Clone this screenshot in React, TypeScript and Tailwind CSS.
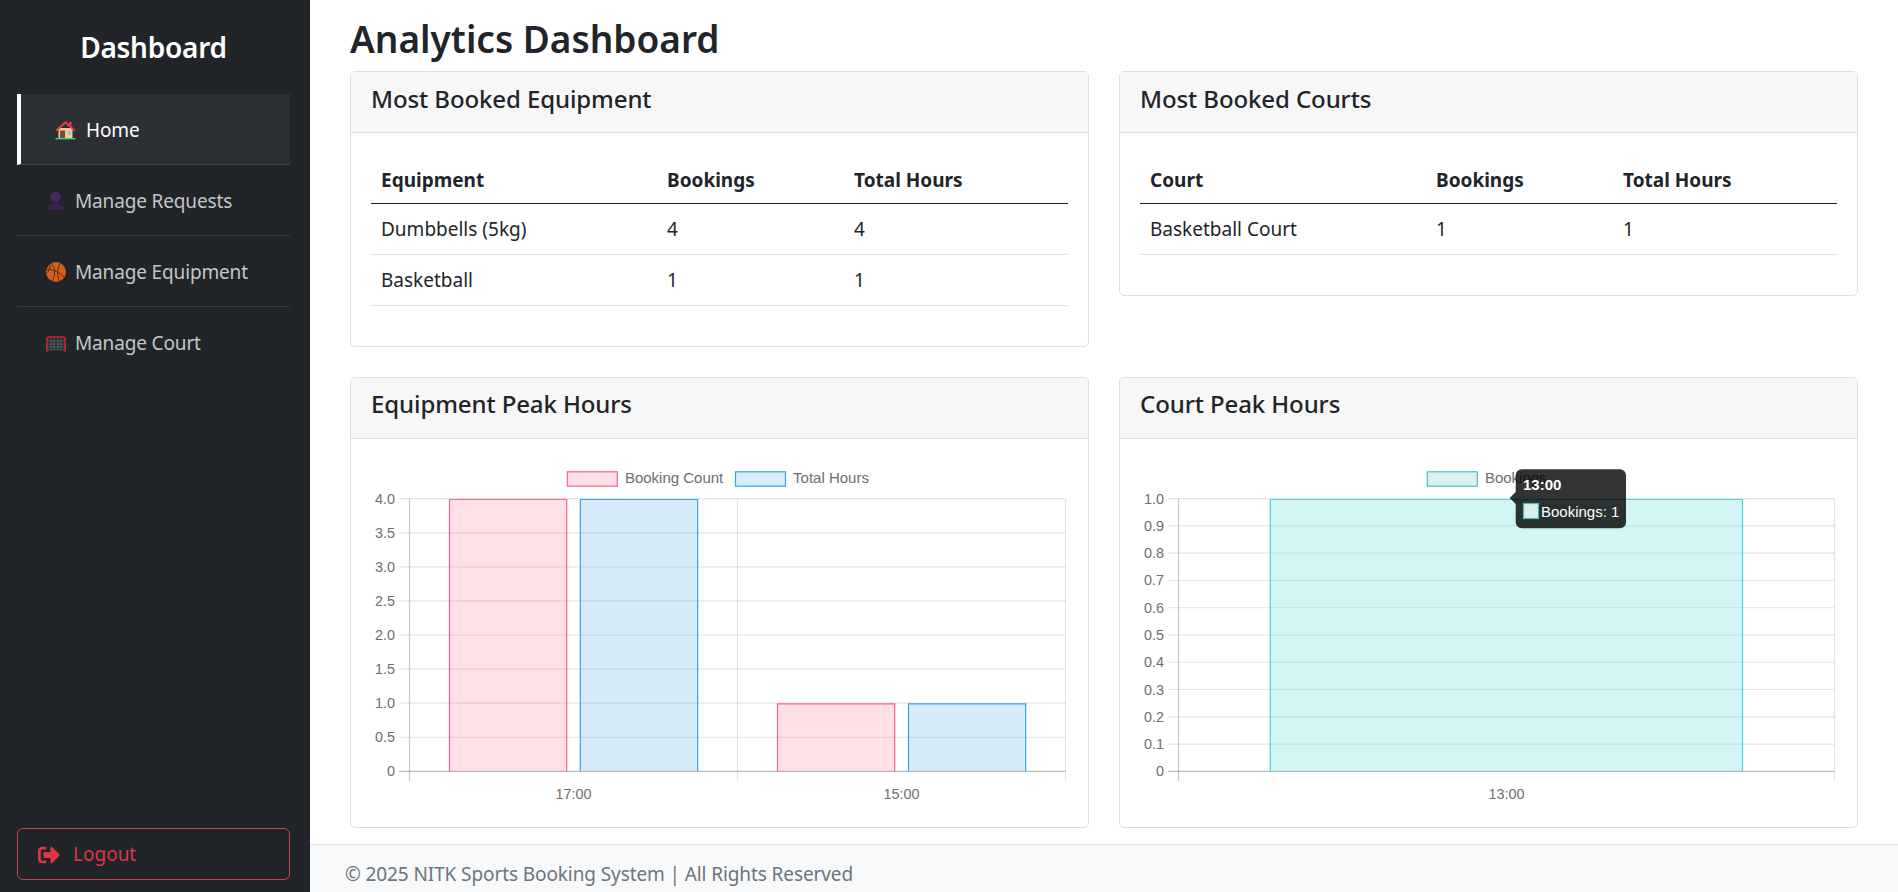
import React from 'react';
import { FaSignOutAlt } from 'react-icons/fa';

const UI_FONT = "font-['Noto_Sans','Open_Sans',sans-serif]";

const HomeIcon = () => (
  <svg width="21" height="20" viewBox="0 0 21 20" className="shrink-0">
    <path d="M3.500 8h14v10h-14z" fill="#f9c68f" />
    <path d="M0.500 10 10.500 1l10 9-1.500 1.300-8.500-7.600L2 11.300z" fill="#e8403a" />
    <path d="M14 2h2.500v4L14 4z" fill="#e8403a" />
    <path d="M5 10.500h5V18H5z" fill="#7a4a32" />
    <path d="M12.500 11h3.500v3.500h-3.500z" fill="#7fc8f0" />
    <path d="M0.500 18h20v1.400h-20z" fill="#22e07a" />
  </svg>
);

const PersonIcon = () => (
  <svg width="20" height="20" viewBox="0 0 20 20" className="shrink-0">
    <ellipse cx="9.500" cy="6" rx="5" ry="5.700" fill="#452a5e" />
    <path d="M7 10h5v3l5.500 2.500 1 3.500H0.500l1-3.500L7 13z" fill="#3b2350" />
  </svg>
);

const BallIcon = () => (
  <svg width="20" height="20" viewBox="0 0 20 20" className="shrink-0">
    <circle cx="10" cy="10" r="10" fill="#d2601f" />
    <g fill="none" stroke="#5a2a12" strokeWidth="1">
      <path d="M1 7.500C7 7 14 10 18.500 16" />
      <path d="M5 1.500c4 3 5 10 1.500 17.500" />
      <path d="M14.500 1.300C11 6 11 11 13 19" />
      <path d="M4 3C4.500 6 3 9 0.500 11" />
    </g>
  </svg>
);

const GoalIcon = () => (
  <svg width="20" height="16" viewBox="0 0 20 16" className="shrink-0">
    <g stroke="#6f7376" strokeWidth="0.700" fill="none">
      <path d="M2 5h16M2 8h16M2 11h16" />
      <path d="M2 14Q10 12.500 18 14" />
      <path d="M5 2v11.500M8 2v11M12 2v11M15 2v11.500" />
    </g>
    <path d="M1 15.500V3.500Q1 1 3.500 1h13q2.500 0 2.500 2.500v12" fill="none" stroke="#c8282e" strokeWidth="1.700" />
  </svg>
);

interface Row {
  name: string;
  bookings: number;
  hours: number;
}

const CardHeader: React.FC<{ title: string }> = ({ title }) => (
  <div className="h-[61px] flex items-center pb-[7px] px-[20px] bg-[#f7f7f7] border-b border-[#dfdfdf]">
    <h5 className="text-[24px] font-medium text-[#212529] tracking-[-0.1px]">{title}</h5>
  </div>
);

const StatCard: React.FC<{ title: string; head: string; rows: Row[] }> = ({ title, head, rows }) => (
  <div className="border border-[#dfdfdf] rounded-[5px] overflow-hidden bg-white">
    <CardHeader title={title} />
    <div className="p-[20px]">
      <table className="w-full table-fixed mb-[20px] text-[#212529] text-[19px]">
        <thead>
          <tr className="h-[50px] border-b border-[#212529] text-left">
            <th className="w-[286px] pl-[10px] pt-[4px] font-bold">{head}</th>
            <th className="w-[187px] pl-[10px] pt-[4px] font-bold">Bookings</th>
            <th className="pl-[10px] pt-[4px] font-bold">Total Hours</th>
          </tr>
        </thead>
        <tbody>
          {rows.map((row) => (
            <tr key={row.name} className="h-[51px] border-b border-[#dee2e6]">
              <td className="pl-[10px] pt-[2px]">{row.name}</td>
              <td className="pl-[10px] pt-[2px]">{row.bookings}</td>
              <td className="pl-[10px] pt-[2px]">{row.hours}</td>
            </tr>
          ))}
        </tbody>
      </table>
    </div>
  </div>
);

const GRID = 'rgba(0,0,0,0.1)';
const LEFT = 38.5;
const RIGHT = 694.5;
const TOP = 39.7;
const BOTTOM = 312.3;

const chartText = {
  fontFamily: 'Liberation Sans, Arial, sans-serif',
  fontSize: 14.4,
  fill: '#6e6e6e',
};

interface Bar {
  x1: number;
  x2: number;
  value: number;
  fill: string;
  stroke: string;
}

const Axes: React.FC<{ ticks: string[]; labels: string[] }> = ({ ticks, labels }) => {
  const step = (BOTTOM - TOP) / (ticks.length - 1);
  const slot = (RIGHT - LEFT) / labels.length;
  return (
    <g>
      {ticks.map((tick, i) => {
        const y = TOP + step * i;
        return (
          <g key={tick}>
            <line x1={28} x2={RIGHT} y1={y} y2={y} stroke={GRID} strokeWidth={1.2} />
            <text x={24} y={y + 5} textAnchor="end" {...chartText}>
              {tick}
            </text>
          </g>
        );
      })}
      {labels.map((label, i) => (
        <text key={label} x={LEFT + slot * (i + 0.5)} y={340} textAnchor="middle" {...chartText}>
          {label}
        </text>
      ))}
      {Array.from({ length: labels.length + 1 }).map((_, i) => (
        <line
          key={i}
          x1={LEFT + slot * i}
          x2={LEFT + slot * i}
          y1={TOP}
          y2={322}
          stroke={GRID}
          strokeWidth={1.2}
        />
      ))}
      <line x1={LEFT} x2={LEFT} y1={TOP} y2={322} stroke="rgba(0,0,0,0.12)" strokeWidth={1.2} />
      <line x1={28} x2={RIGHT} y1={BOTTOM} y2={BOTTOM} stroke="rgba(0,0,0,0.18)" strokeWidth={1.2} />
    </g>
  );
};

const Bars: React.FC<{ bars: Bar[]; max: number }> = ({ bars, max }) => (
  <g>
    {bars.map((bar, i) => {
      const top = BOTTOM - ((BOTTOM - TOP) * bar.value) / max + 0.8;
      return (
        <path
          key={i}
          d={`M${bar.x1} ${BOTTOM}V${top}H${bar.x2}V${BOTTOM}`}
          fill={bar.fill}
          stroke={bar.stroke}
          strokeWidth={1.2}
        />
      );
    })}
  </g>
);

const Legend: React.FC<{ x: number; label: string; fill: string; stroke: string }> = ({ x, label, fill, stroke }) => (
  <g>
    <rect x={x} y={12.8} width={50} height={14.4} fill={fill} stroke={stroke} strokeWidth={1.2} />
    <text x={x + 57.6} y={24} {...chartText} fontSize={15}>
      {label}
    </text>
  </g>
);

const PINK = { fill: 'rgba(255,99,132,0.2)', stroke: 'rgb(255,99,132)' };
const BLUE = { fill: 'rgba(54,162,235,0.2)', stroke: 'rgb(54,162,235)' };
const TEAL = { fill: 'rgba(75,192,192,0.2)', stroke: 'rgb(75,192,192)' };

const EquipmentChart = () => (
  <svg width="697" height="348" className="block">
    <Axes ticks={['4.0', '3.5', '3.0', '2.5', '2.0', '1.5', '1.0', '0.5', '0']} labels={['17:00', '15:00']} />
    <Bars
      max={4}
      bars={[
        { x1: 78.5, x2: 195.7, value: 4, ...PINK },
        { x1: 209.3, x2: 326.7, value: 4, ...BLUE },
        { x1: 406.5, x2: 523.7, value: 1, ...PINK },
        { x1: 537.5, x2: 654.7, value: 1, ...BLUE },
      ]}
    />
    <Legend x={196.3} label="Booking Count" {...PINK} />
    <Legend x={364.5} label="Total Hours" {...BLUE} />
  </svg>
);

const CourtChart = () => (
  <svg width="697" height="348" className="block">
    <Axes ticks={['1.0', '0.9', '0.8', '0.7', '0.6', '0.5', '0.4', '0.3', '0.2', '0.1', '0']} labels={['13:00']} />
    <Bars max={1} bars={[{ x1: 130.3, x2: 602.5, value: 1, fill: 'rgba(50,215,215,0.22)', stroke: '#45d6d6' }]} />
    <Legend x={287.3} label="Bookings" {...TEAL} />
    <g>
      <path
        d="M381.700 10.300h98.300a6 6 0 0 1 6 6v47a6 6 0 0 1-6 6h-98.300a6 6 0 0 1-6-6v-18.300l-6-6 6-6v-16.700a6 6 0 0 1 6-6z"
        fill="rgba(0,0,0,0.8)"
      />
      <text x={383} y={31} {...chartText} fontSize={15} fill="#fff" style={{ fontWeight: 700 }}>
        13:00
      </text>
      <rect x={383.500} y={44.500} width={15} height={15} fill="#d8f0f0" stroke="#4fb5b5" strokeWidth={1.2} />
      <text x={401} y={57.700} {...chartText} fontSize={15} fill="#fff">
        Bookings: 1
      </text>
    </g>
  </svg>
);

const ChartCard: React.FC<{ title: string; children: React.ReactNode }> = ({ title, children }) => (
  <div className="border border-[#dfdfdf] rounded-[5px] overflow-hidden bg-white">
    <CardHeader title={title} />
    <div className="p-[20px]">{children}</div>
  </div>
);

const NavItem: React.FC<{ icon: React.ReactNode; label: string; active?: boolean }> = ({ icon, label, active }) => (
  <a
    className={
      active
        ? 'flex items-center h-[71px] pl-[34px] pt-[2px] gap-[10px] border-l-4 border-l-white border-b border-b-white/10 bg-white/5 text-white'
        : 'flex items-center h-[71px] pl-[29px] pt-[2px] gap-[9px] border-b border-b-white/10 text-[#c4c6c8] last:border-b-0'
    }
  >
    {icon}
    <span>{label}</span>
  </a>
);

export default function App() {
  return (
    <div className={`flex h-screen overflow-hidden bg-white ${UI_FONT}`}>
      <aside className="w-[310px] shrink-0 bg-[#212529] flex flex-col pl-[17px] pr-[20px] pb-[12px]">
        <h3 className="h-[94px] flex items-center justify-center text-[28px] font-semibold text-white tracking-[-0.25px]">
          Dashboard
        </h3>
        <nav className="flex flex-col text-[19px] tracking-[-0.15px]">
          <NavItem active icon={<HomeIcon />} label="Home" />
          <NavItem icon={<PersonIcon />} label="Manage Requests" />
          <NavItem icon={<BallIcon />} label="Manage Equipment" />
          <NavItem icon={<GoalIcon />} label="Manage Court" />
        </nav>
        <button className="mt-auto h-[52px] flex items-center gap-[13px] pl-[20px] pt-[1px] border border-[#c9434f] rounded-[6px] text-[#dc3545] text-[19px]">
          <FaSignOutAlt size={22} />
          Logout
        </button>
      </aside>

      <div className="flex-1 min-w-0 flex flex-col">
        <main className="flex-1 min-h-0 px-[40px]">
          <h1 className="h-[71px] flex items-center pt-[6px] text-[37px] font-semibold text-[#212529]">
            Analytics Dashboard
          </h1>
          <div className="grid grid-cols-2 gap-x-[30px] gap-y-[30px] items-start">
            <StatCard
              title="Most Booked Equipment"
              head="Equipment"
              rows={[
                { name: 'Dumbbells (5kg)', bookings: 4, hours: 4 },
                { name: 'Basketball', bookings: 1, hours: 1 },
              ]}
            />
            <StatCard
              title="Most Booked Courts"
              head="Court"
              rows={[{ name: 'Basketball Court', bookings: 1, hours: 1 }]}
            />
            <ChartCard title="Equipment Peak Hours">
              <EquipmentChart />
            </ChartCard>
            <ChartCard title="Court Peak Hours">
              <CourtChart />
            </ChartCard>
          </div>
        </main>
        <footer className="h-[48px] shrink-0 flex items-center px-[35px] pt-[12px] bg-[#f8f9fa] border-t border-[#dee2e6] text-[#6c757d] text-[19px] tracking-[-0.1px]">
          © 2025 NITK Sports Booking System | All Rights Reserved
        </footer>
      </div>
    </div>
  );
}
